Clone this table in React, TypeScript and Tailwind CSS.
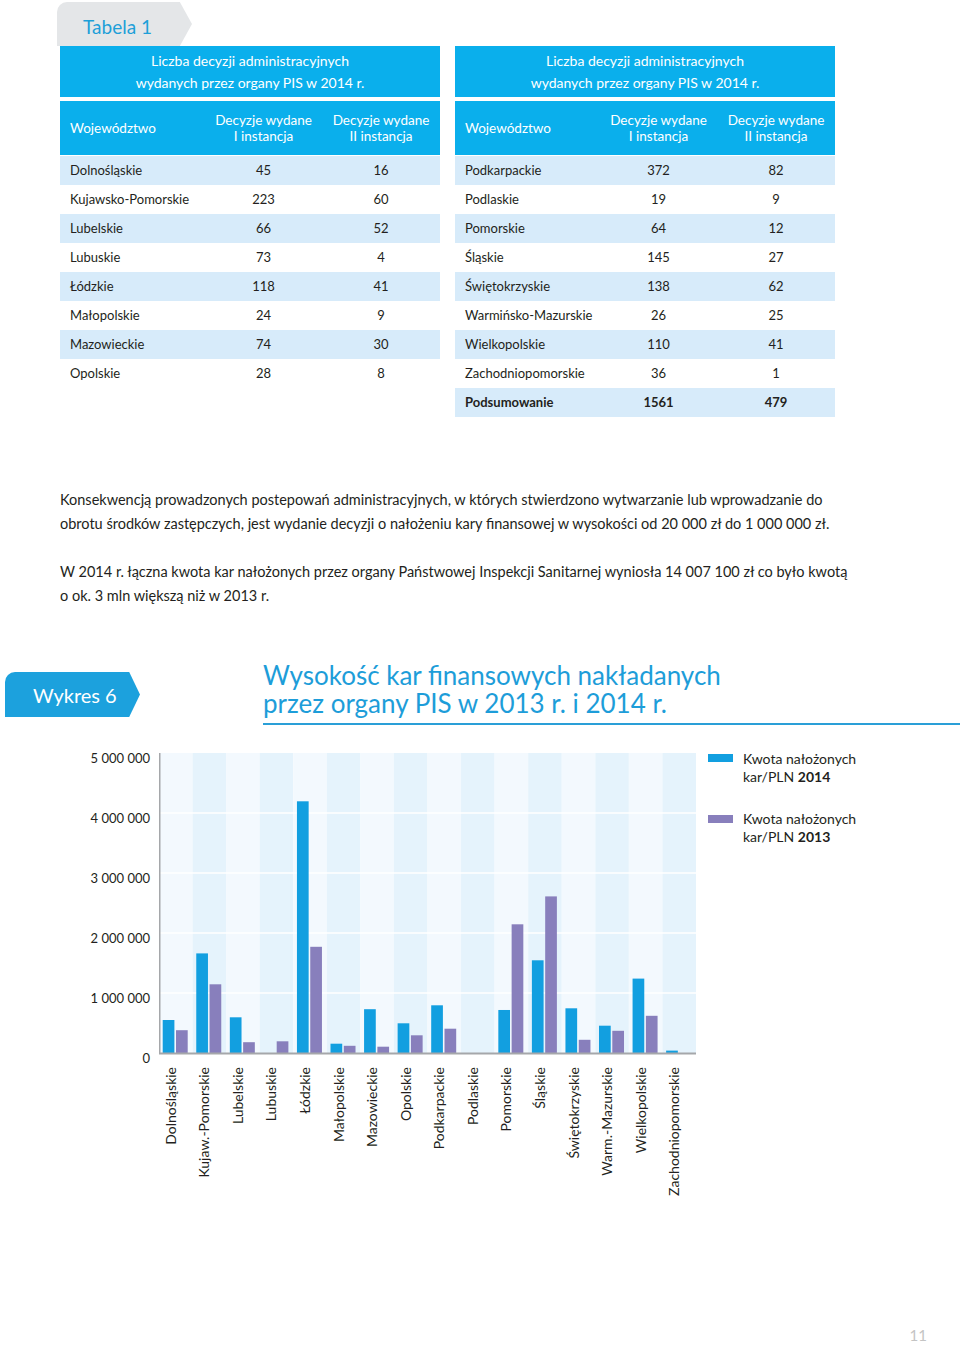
const leftRows = [
  ["Dolnośląskie", "45", "16"],
  ["Kujawsko-Pomorskie", "223", "60"],
  ["Lubelskie", "66", "52"],
  ["Lubuskie", "73", "4"],
  ["Łódzkie", "118", "41"],
  ["Małopolskie", "24", "9"],
  ["Mazowieckie", "74", "30"],
  ["Opolskie", "28", "8"],
];

const rightRows = [
  ["Podkarpackie", "372", "82"],
  ["Podlaskie", "19", "9"],
  ["Pomorskie", "64", "12"],
  ["Śląskie", "145", "27"],
  ["Świętokrzyskie", "138", "62"],
  ["Warmińsko-Mazurskie", "26", "25"],
  ["Wielkopolskie", "110", "41"],
  ["Zachodniopomorskie", "36", "1"],
  ["Podsumowanie", "1561", "479"],
];

// values in millions PLN: [name, 2014, 2013]
const chart: [string, number, number][] = [
  ["Dolnośląskie", 0.55, 0.38],
  ["Kujaw.-Pomorskie", 1.66, 1.145],
  ["Lubelskie", 0.595, 0.18],
  ["Lubuskie", 0, 0.195],
  ["Łódzkie", 4.195, 1.77],
  ["Małopolskie", 0.155, 0.12],
  ["Mazowieckie", 0.73, 0.105],
  ["Opolskie", 0.495, 0.295],
  ["Podkarpackie", 0.795, 0.405],
  ["Podlaskie", 0, 0],
  ["Pomorskie", 0.717, 2.145],
  ["Śląskie", 1.545, 2.61],
  ["Świętokrzyskie", 0.745, 0.22],
  ["Warm.-Mazurskie", 0.455, 0.37],
  ["Wielkopolskie", 1.24, 0.62],
  ["Zachodniopomorskie", 0.04, 0],
];

const COL = 537 / 16;

function Table({ rows, last }: { rows: string[][]; last?: boolean }) {
  return (
    <div className="w-[380px]">
      <div className="h-[51px] bg-[#0aafec] flex flex-col justify-center text-center text-white text-[14px] leading-[22px]">
        <p>Liczba decyzji administracyjnych</p>
        <p>wydanych przez organy PIS w 2014 r.</p>
      </div>
      <div className="mt-[4px] h-[54px] bg-[#0aafec] flex items-center text-white text-[13.5px] leading-[16px]">
        <div className="w-[145px] pl-[10px]">Województwo</div>
        <div className="w-[117px] text-center">Decyzje wydane<br />I instancja</div>
        <div className="flex-1 text-center">Decyzje wydane<br />II instancja</div>
      </div>
      <div className="mt-[1px]">
        {rows.map((r, i) => (
          <div
            key={r[0]}
            className={`h-[29px] flex items-center text-[13px] text-[#231f20] ${i % 2 == 0 ? "bg-[#d7ebfa]" : "bg-white"} ${last && i == rows.length - 1 ? "font-bold" : ""}`}
          >
            <div className="w-[145px] pl-[10px]">{r[0]}</div>
            <div className="w-[117px] text-center">{r[1]}</div>
            <div className="flex-1 text-center">{r[2]}</div>
          </div>
        ))}
      </div>
    </div>
  );
}

function Plot() {
  return (
    <svg width={537} height={302} className="block">
      {chart.map((_, i) => (
        <rect key={i} x={i * COL} y={0} width={COL} height={300} fill={i % 2 == 0 ? "#f3f9fe" : "#e5f3fc"} />
      ))}
      {[60, 120, 180, 240].map((y) => (
        <line key={y} x1={0} x2={537} y1={y} y2={y} stroke="#ffffff" strokeWidth={1.5} />
      ))}
      {chart.map(([name, a, b], i) => (
        <g key={name}>
          {a > 0 && <rect x={i * COL + 3.7} y={300 - a * 60} width={11.7} height={a * 60} fill="#129fe0" />}
          {b > 0 && <rect x={i * COL + 17} y={300 - b * 60} width={11.7} height={b * 60} fill="#887fbc" />}
        </g>
      ))}
      <line x1={0.75} x2={0.75} y1={0} y2={301} stroke="#a5a7aa" strokeWidth={1.5} />
      <line x1={0} x2={537} y1={300.5} y2={300.5} stroke="#a5a7aa" strokeWidth={2} />
    </svg>
  );
}

export default function App() {
  return (
    <div className="w-[960px] h-[1345px] bg-white flex flex-col font-['Lato',sans-serif] text-[#231f20]">
      {/* tab */}
      <div className="mt-[2px] ml-[57px]">
        <div className="w-[135px] h-[44px] bg-[#e4e6e8] rounded-tl-[10px] [clip-path:polygon(0_0,91%_0,100%_50%,91%_100%,0_100%)] flex items-center pt-[7px] pl-[26px] text-[19px] text-[#1d9fd8]">
          Tabela 1
        </div>
      </div>

      {/* tables */}
      <div className="flex gap-[15px] pl-[60px] items-start">
        <Table rows={leftRows} />
        <Table rows={rightRows} last />
      </div>

      {/* text */}
      <div className="pl-[60px] text-[14.5px] leading-[24px] whitespace-nowrap">
        <p className="mt-[71px]">
          Konsekwencją prowadzonych postepowań administracyjnych, w których stwierdzono wytwarzanie lub wprowadzanie do
          <br />
          obrotu środków zastępczych, jest wydanie decyzji o nałożeniu kary finansowej w wysokości od 20 000 zł do 1 000 000 zł.
        </p>
        <p className="mt-[24px]">
          W 2014 r. łączna kwota kar nałożonych przez organy Państwowej Inspekcji Sanitarnej wyniosła 14 007 100 zł co było kwotą
          <br />
          o ok. 3 mln większą niż w 2013 r.
        </p>
      </div>

      {/* chart heading */}
      <div className="mt-[53px] flex items-start">
        <div className="mt-[11px] ml-[5px] w-[135px] h-[45px] bg-[#1ca1dd] rounded-tl-[10px] [clip-path:polygon(0_0,92%_0,100%_50%,92%_100%,0_100%)] flex items-center pl-[28px] text-[20px] text-white">
          Wykres 6
        </div>
        <div className="ml-[123px] flex-1 border-b-2 border-[#2a9fd7] pb-[6px] text-[26px] leading-[28px] text-[#1d9dd9]">
          <p className="h-[28px]">Wysokość kar finansowych nakładanych</p>
          <p className="h-[28px]">przez organy PIS w 2013 r. i 2014 r.</p>
        </div>
      </div>

      {/* chart */}
      <div className="mt-[28px] flex items-start">
        <div className="w-[150px] -mt-[5px] flex flex-col items-end text-[13px] leading-[20px]">
          {["5 000 000", "4 000 000", "3 000 000", "2 000 000", "1 000 000", "0"].map((t) => (
            <div key={t} className="h-[60px]">{t}</div>
          ))}
        </div>
        <div className="ml-[9px] w-[537px]">
          <Plot />
          <div className="mt-[12px] flex items-start">
            {chart.map(([name]) => (
              <div key={name} className="flex-1 flex items-start justify-center pr-[10px]">
                <span className="[writing-mode:vertical-rl] rotate-180 text-[14px] leading-[16px] whitespace-nowrap">{name}</span>
              </div>
            ))}
          </div>
        </div>
        <div className="ml-[12px] -mt-[3px] flex flex-col gap-[24px] text-[14px] leading-[18px]">
          <div className="flex items-start gap-[10px]">
            <div className="w-[25px] h-[8px] mt-[4px] bg-[#129fe0]" />
            <p>Kwota nałożonych<br />kar/PLN <b>2014</b></p>
          </div>
          <div className="flex items-start gap-[10px]">
            <div className="w-[25px] h-[8px] mt-[5px] bg-[#887fbc]" />
            <p>Kwota nałożonych<br />kar/PLN <b>2013</b></p>
          </div>
        </div>
      </div>

      {/* page number */}
      <div className="mt-auto pb-[1px] pr-[33px] flex justify-end text-[15px] leading-[18px] text-[#c4c4c4]">11</div>
    </div>
  );
}
